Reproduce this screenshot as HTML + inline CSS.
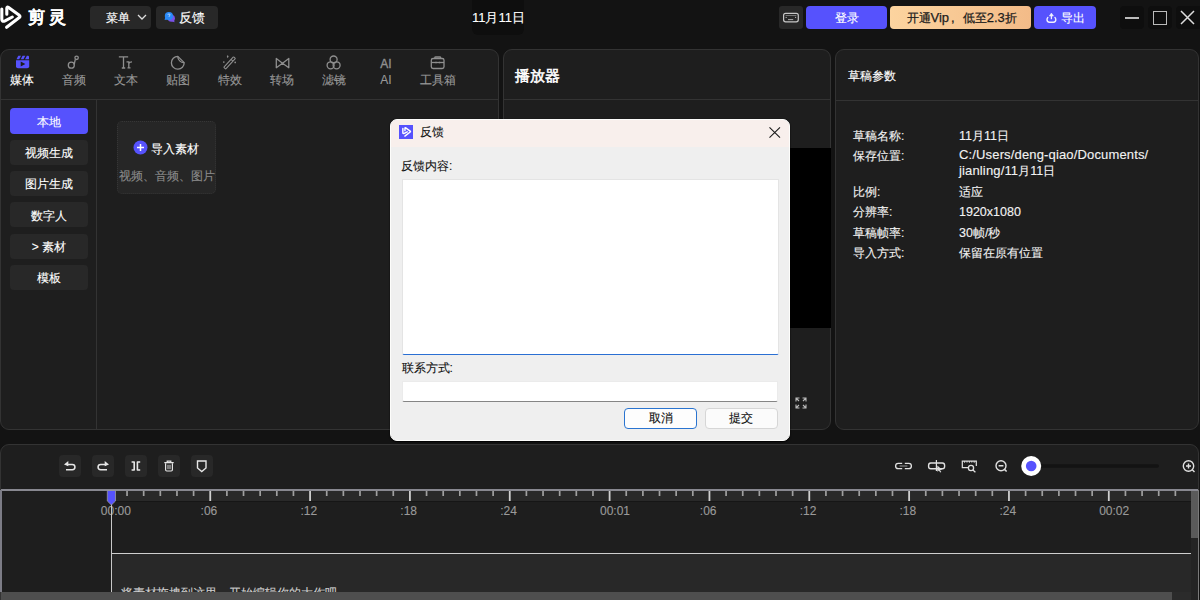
<!DOCTYPE html>
<html><head><meta charset="utf-8">
<style>
*{box-sizing:border-box;margin:0;padding:0}
html,body{width:1200px;height:600px;overflow:hidden;background:#131313;font-family:"Liberation Sans",sans-serif;color:#e8e8e8;font-size:12px}
.a{position:absolute}
.btn{position:absolute;background:#282828;border-radius:4px}
.panel{position:absolute;background:#1e1e1e;border:1px solid #333;border-radius:9px}
.t{position:absolute;white-space:nowrap;line-height:1;-webkit-text-stroke:0.12px currentColor}
svg{position:absolute;overflow:visible}
</style></head><body>

<!-- ===== TOP BAR ===== -->
<svg style="left:0;top:0" width="26" height="32" viewBox="0 0 26 32">
  <path d="M1.8 9 V19 Q1.8 22.2 5 20.8 L12.3 17" fill="none" stroke="#fff" stroke-width="3.1" stroke-linecap="round" stroke-linejoin="round"/>
  <path d="M6.8 14.3 V8.3 Q6.8 6.3 8.6 7.6 L19.3 15.3 Q20.6 16.5 19.3 17.6 L6.6 27.3" fill="none" stroke="#fff" stroke-width="3.1" stroke-linecap="round" stroke-linejoin="round"/>
</svg>
<div class="t" style="left:27.5px;top:9px;font-size:16.5px;font-weight:bold;color:#fff;letter-spacing:4px;-webkit-text-stroke:0.1px #fff">剪灵</div>

<div class="btn" style="left:90px;top:6px;width:61px;height:23px"></div>
<div class="t" style="left:105.5px;top:11.5px;font-size:12px;color:#fff">菜单</div>
<svg style="left:137px;top:14px" width="10" height="6" viewBox="0 0 10 6"><path d="M1 1 L5 5 L9 1" fill="none" stroke="#ddd" stroke-width="1.3"/></svg>

<div class="btn" style="left:156px;top:6px;width:62px;height:23px"></div>
<svg style="left:164px;top:12px" width="12" height="11" viewBox="0 0 12 11">
  <circle cx="7.4" cy="6.3" r="3.5" fill="#7a52e8"/>
  <path d="M8 9.5 L10.6 10.3 L9.9 7.5 Z" fill="#7a52e8"/>
  <circle cx="4.9" cy="4.1" r="4.1" fill="#2a8af8"/>
  <path d="M1.2 5.2 L0.6 8 L3.4 7.6 Z" fill="#2a8af8"/>
  <path d="M3.8 2.8 Q4.2 1.9 5 1.9 Q6 1.9 6 2.9 Q6 3.6 5.1 4 V4.8" fill="none" stroke="#cfe6ff" stroke-width="0.8"/>
</svg>
<div class="t" style="left:179px;top:11.5px;font-size:12.5px;color:#fff">反馈</div>

<div class="a" style="left:472px;top:0;width:52px;height:35px;background:#0e0e0e;border-radius:0 0 6px 6px"></div>
<div class="t" style="left:472px;top:11px;font-size:13px;color:#fff">11月11日</div>

<div class="btn" style="left:779px;top:6px;width:24px;height:23px;border-radius:3px"></div>
<svg style="left:778px;top:6px" width="26" height="23" viewBox="778 6 26 23">
  <rect x="783.6" y="13.4" width="14.7" height="8.4" rx="2" fill="none" stroke="#c8c8c8" stroke-width="1.2"/>
  <path d="M785.6 15.5 H796.4" stroke="#8a8a8a" stroke-width="0.8"/>
  <circle cx="786.2" cy="17.4" r="0.65" fill="#aaa"/><circle cx="795.6" cy="17.3" r="0.65" fill="#bbb"/>
  <path d="M788 19.6 H793.2" stroke="#aaa" stroke-width="1"/>
</svg>
<div class="a" style="left:806px;top:6px;width:81px;height:23px;background:#5652fd;border-radius:4px"></div>
<div class="t" style="left:834.5px;top:11.5px;font-size:12px;color:#fff">登录</div>

<div class="a" style="left:890px;top:6px;width:141px;height:23px;background:linear-gradient(90deg,#fcd49f,#f3bb88);border-radius:4px"></div>
<div class="t" style="left:906.5px;top:10.5px;font-size:12px;color:#1c1c1c;-webkit-text-stroke:0.25px #1c1c1c">开通<span style="font-size:13px">Vip</span><span style="margin-left:2px;margin-right:8px;font-size:13px">,</span>低至<span style="font-size:13px">2.3</span>折</div>

<div class="a" style="left:1034px;top:6px;width:62px;height:23px;background:#5652fd;border-radius:4px"></div>
<svg style="left:1046px;top:12px" width="11" height="12" viewBox="0 0 11 12">
  <path d="M1.8 5.5 Q1 6.2 1 7.8 Q1 10.2 3.4 10.2 H7.4 Q9.8 10.2 9.8 7.8 Q9.8 6.2 9 5.5" fill="none" stroke="#f0f0ff" stroke-width="1.4" stroke-linecap="round"/>
  <path d="M5.4 7.2 V3.2" stroke="#f0f0ff" stroke-width="1.3"/>
  <path d="M3.4 4 L5.4 1.1 L7.4 4 Z" fill="#f0f0ff" stroke="#f0f0ff" stroke-width="0.6" stroke-linejoin="round"/>
</svg>
<div class="t" style="left:1061px;top:11.5px;font-size:12px;color:#fff">导出</div>

<div class="a" style="left:1120px;top:6px;width:24px;height:23px;background:#0e0e0e;border-radius:4px"></div>
<div class="a" style="left:1125px;top:17px;width:14px;height:1.5px;background:#bbb"></div>
<div class="a" style="left:1148px;top:6px;width:24px;height:23px;background:#0e0e0e;border-radius:4px"></div>
<div class="a" style="left:1153px;top:11px;width:14px;height:14px;border:1.5px solid #bbb"></div>
<div class="a" style="left:1176px;top:6px;width:24px;height:23px;background:#0e0e0e;border-radius:4px 0 0 4px"></div>
<svg style="left:1180px;top:10px" width="15" height="15" viewBox="0 0 15 15"><path d="M1 1 L14 14 M14 1 L1 14" stroke="#ddd" stroke-width="1.5"/></svg>

<!-- ===== PANEL 1 ===== -->
<div class="panel" style="left:0;top:49px;width:499px;height:381px"></div>
<div class="a" style="left:1px;top:99px;width:497px;height:1px;background:#333"></div>
<div class="a" style="left:96px;top:100px;width:1px;height:329px;background:#333"></div>

<svg style="left:0;top:0" width="1200" height="600" viewBox="0 0 1200 600">
  <!-- media clapper -->
  <g fill="#5652fd">
    <path d="M16.5 59.2 L18.3 55.8 L21 55.8 L19.2 59.2 Z"/>
    <path d="M20.8 59.2 L22.6 55.8 L25.3 55.8 L23.5 59.2 Z"/>
    <path d="M25.1 59.2 L26.9 55.8 L28 55.8 Q29 55.8 29 57 L29 59.2 Z"/>
    <path d="M16 60.3 H29.2 V66.3 Q29.2 68.3 27.2 68.3 H18 Q16 68.3 16 66.3 Z"/>
  </g>
  <path d="M20.7 61.4 L25.4 63.9 L20.7 66.4 Z" fill="#1e1e1e"/>
  <!-- music -->
  <g fill="none" stroke="#8f8f8f" stroke-width="1.3">
    <circle cx="71.3" cy="65.2" r="3"/>
    <path d="M74.2 64.5 L75.3 59.3"/>
    <circle cx="76.6" cy="57.8" r="1.7"/>
  </g>
  <!-- Tr -->
  <g fill="none" stroke="#8f8f8f" stroke-width="1.3">
    <path d="M119.5 57.5 V56.8 H127.5 V57.5 M123.5 56.8 V68 M121.8 68 H125.2"/>
    <path d="M126.5 61.8 H128.8 V67.8 M127.5 67.8 H130.5 M128.8 63.5 Q129.8 61.8 132 61.8"/>
  </g>
  <!-- sticker -->
  <g fill="none" stroke="#8f8f8f" stroke-width="1.3" stroke-linejoin="round">
    <path d="M177.8 56.4 A6.4 6.4 0 1 0 184.2 62.6 Z"/>
    <path d="M177.8 56.4 A6.2 6.2 0 0 0 184.2 62.6"/>
  </g>
  <!-- wand -->
  <g transform="translate(229.6,62.9) rotate(-47)">
    <rect x="-7.2" y="-1.3" width="14.4" height="2.6" rx="0.6" fill="none" stroke="#8f8f8f" stroke-width="1.1"/>
    <path d="M3.5 -1.3 V1.3" stroke="#8f8f8f" stroke-width="1"/>
  </g>
  <g fill="#8f8f8f">
    <path d="M227.7 55 L228.6 56.6 L227.7 58.2 L226.8 56.6 Z"/>
    <circle cx="223.8" cy="62" r="0.85"/>
    <circle cx="235.2" cy="62.4" r="0.85"/>
  </g>
  <!-- bowtie -->
  <path d="M276.3 58.5 L282.5 63.2 L276.3 67.7 Z M288.8 58.5 L282.5 63.2 L288.8 67.7 Z" fill="none" stroke="#8f8f8f" stroke-width="1.3" stroke-linejoin="round"/>
  <!-- filter -->
  <g fill="none" stroke="#8f8f8f" stroke-width="1.3">
    <circle cx="333.6" cy="59.5" r="3.5"/>
    <circle cx="330.6" cy="65.3" r="3.5"/>
    <circle cx="336.6" cy="65.3" r="3.5"/>
  </g>
  <!-- AI -->
  <text x="380.2" y="67.6" font-family="Liberation Sans" font-size="12" fill="#8f8f8f" stroke="#8f8f8f" stroke-width="0.35">AI</text>
  <!-- toolbox -->
  <g fill="none" stroke="#8f8f8f" stroke-width="1.3">
    <path d="M434.8 58.5 V57.8 Q434.8 57 435.8 57 H439.7 Q440.7 57 440.7 57.8 V58.5"/>
    <rect x="431.3" y="58.5" width="12.7" height="10" rx="1.8"/>
    <path d="M431.3 62.5 H444"/>
    <path d="M436 61.8 V63.3 M439.5 61.8 V63.3"/>
  </g>
</svg>
<div class="t" style="left:0;top:73.5px;width:44px;text-align:center;font-size:12px;color:#fff">媒体</div>
<div class="t" style="left:52px;top:73.5px;width:44px;text-align:center;font-size:12px;color:#999">音频</div>
<div class="t" style="left:104px;top:73.5px;width:44px;text-align:center;font-size:12px;color:#999">文本</div>
<div class="t" style="left:156px;top:73.5px;width:44px;text-align:center;font-size:12px;color:#999">贴图</div>
<div class="t" style="left:208px;top:73.5px;width:44px;text-align:center;font-size:12px;color:#999">特效</div>
<div class="t" style="left:260px;top:73.5px;width:44px;text-align:center;font-size:12px;color:#999">转场</div>
<div class="t" style="left:312px;top:73.5px;width:44px;text-align:center;font-size:12px;color:#999">滤镜</div>
<div class="t" style="left:364px;top:73.5px;width:44px;text-align:center;font-size:12px;color:#999">AI</div>
<div class="t" style="left:408px;top:73.5px;width:60px;text-align:center;font-size:12px;color:#999">工具箱</div>


<div class="a" style="left:10px;top:108px;width:78px;height:25.5px;background:#5652fd;border-radius:4px"></div>
<div class="t" style="left:10px;top:116px;width:78px;text-align:center;font-size:12px;color:#fff">本地</div>
<div class="btn" style="left:10px;top:140px;width:78px;height:25px"></div>
<div class="t" style="left:10px;top:147px;width:78px;text-align:center;font-size:12px;color:#fff">视频生成</div>
<div class="btn" style="left:10px;top:171px;width:78px;height:25px"></div>
<div class="t" style="left:10px;top:178px;width:78px;text-align:center;font-size:12px;color:#fff">图片生成</div>
<div class="btn" style="left:10px;top:202px;width:78px;height:25px"></div>
<div class="t" style="left:10px;top:209.5px;width:78px;text-align:center;font-size:12px;color:#fff">数字人</div>
<div class="btn" style="left:10px;top:234px;width:78px;height:25px"></div>
<div class="t" style="left:10px;top:241px;width:78px;text-align:center;font-size:12px;color:#fff">&gt; 素材</div>
<div class="btn" style="left:10px;top:265px;width:78px;height:25px"></div>
<div class="t" style="left:10px;top:272px;width:78px;text-align:center;font-size:12px;color:#fff">模板</div>

<div class="a" style="left:117px;top:121px;width:99px;height:73px;background:#262626;border-radius:5px;border:1px dotted #363636"></div>
<svg style="left:133px;top:140px" width="15" height="15" viewBox="0 0 15 15"><circle cx="7.5" cy="7.5" r="7" fill="#5652fd"/><path d="M7.5 4 V11 M4 7.5 H11" stroke="#fff" stroke-width="1.5"/></svg>
<div class="t" style="left:151px;top:142.5px;font-size:12px;color:#fff">导入素材</div>
<div class="t" style="left:119px;top:169.5px;font-size:12px;color:#8a8a8a">视频、音频、图片</div>

<!-- ===== PANEL 2 ===== -->
<div class="panel" style="left:503px;top:49px;width:328px;height:381px"></div>
<div class="a" style="left:504px;top:99px;width:326px;height:1px;background:#333"></div>
<div class="t" style="left:515px;top:68.5px;font-size:14.5px;color:#fff;-webkit-text-stroke:0.55px #fff">播放器</div>
<div class="a" style="left:504px;top:148px;width:327px;height:180px;background:#000"></div>
<svg style="left:795px;top:397px" width="12" height="12" viewBox="0 0 12 12"><path d="M1 4.5 V1 H4.5 M1 1 L4 4 M11 4.5 V1 H7.5 M11 1 L8 4 M1 7.5 V11 H4.5 M1 11 L4 8 M11 7.5 V11 H7.5 M11 11 L8 8" fill="none" stroke="#bbb" stroke-width="1.1"/></svg>

<!-- ===== PANEL 3 ===== -->
<div class="panel" style="left:835px;top:49px;width:364px;height:381px"></div>
<div class="a" style="left:836px;top:100px;width:362px;height:1px;background:#333"></div>
<div class="t" style="left:847.5px;top:69.5px;font-size:12px;color:#fff">草稿参数</div>

<div class="t" style="left:853px;top:129px;font-size:12px;line-height:15px;color:#f2f2f2">草稿名称:</div>
<div class="t" style="left:959px;top:129px;font-size:12px;line-height:15px;color:#f2f2f2"><span style="font-size:12.5px">11</span>月<span style="font-size:12.5px">11</span>日</div>
<div class="t" style="left:853px;top:149px;font-size:12px;line-height:15px;color:#f2f2f2">保存位置:</div>
<div class="t" style="left:959px;top:147px;font-size:12px;line-height:15px;color:#f2f2f2"><span style="font-size:13px;letter-spacing:0.15px">C:/Users/deng-qiao/Documents/</span><br><span style="font-size:13px;letter-spacing:0.15px">jianling/11</span>月<span style="font-size:12.5px">11</span>日</div>
<div class="t" style="left:853px;top:185px;font-size:12px;line-height:15px;color:#f2f2f2">比例:</div>
<div class="t" style="left:959px;top:185px;font-size:12px;line-height:15px;color:#f2f2f2">适应</div>
<div class="t" style="left:853px;top:205px;font-size:12px;line-height:15px;color:#f2f2f2">分辨率:</div>
<div class="t" style="left:959px;top:205px;font-size:12px;line-height:15px;color:#f2f2f2"><span style="font-size:12.5px">1920x1080</span></div>
<div class="t" style="left:853px;top:226px;font-size:12px;line-height:15px;color:#f2f2f2">草稿帧率:</div>
<div class="t" style="left:959px;top:226px;font-size:12px;line-height:15px;color:#f2f2f2"><span style="font-size:12.5px">30</span>帧<span style="font-size:12.5px">/</span>秒</div>
<div class="t" style="left:853px;top:246px;font-size:12px;line-height:15px;color:#f2f2f2">导入方式:</div>
<div class="t" style="left:959px;top:246px;font-size:12px;line-height:15px;color:#f2f2f2">保留在原有位置</div>


<!-- ===== TIMELINE ===== -->
<div class="panel" style="left:0;top:444px;width:1199px;height:170px"></div>
<div class="btn" style="left:59px;top:455px;width:22px;height:21.5px;border-radius:4px"></div>
<div class="btn" style="left:92px;top:455px;width:22px;height:21.5px;border-radius:4px"></div>
<div class="btn" style="left:125px;top:455px;width:22px;height:21.5px;border-radius:4px"></div>
<div class="btn" style="left:158px;top:455px;width:22px;height:21.5px;border-radius:4px"></div>
<div class="btn" style="left:191px;top:455px;width:22px;height:21.5px;border-radius:4px"></div>
<svg style="left:0;top:0" width="1200" height="600" viewBox="0 0 1200 600">
  <g fill="none" stroke="#e6e6e6" stroke-width="1.4">
    <!-- undo -->
    <path d="M67 464.4 H72.3 A2.65 2.65 0 0 1 72.3 469.7 H66" stroke-width="1.5"/>
    <!-- redo -->
    <path d="M106 464.4 H100.7 A2.65 2.65 0 0 0 100.7 469.7 H107" stroke-width="1.5"/>
    <!-- split -->
    <path d="M131.6 462 H134.2 V470 H131.6" stroke-width="1.6" stroke-linejoin="round"/>
    <path d="M140.2 462 H137.4 V470 H140.2" stroke-width="1.6" stroke-linejoin="round"/>
    <!-- delete -->
    <path d="M164.3 462.6 H173.7 M167.2 462.6 V461.2 H170.8 V462.6" stroke-width="1.2"/>
    <path d="M165.6 463.2 V469.8 Q165.6 471 166.8 471 H171.2 Q172.4 471 172.4 469.8 V463.2" stroke-width="1.2"/>
    <path d="M168 464.8 V469.2 M170 464.8 V469.2" stroke-width="0.9"/>
    <!-- shield -->
    <path d="M197.5 461 H206 V468 L201.75 471.5 L197.5 468 Z"/>
  </g>
  <g fill="none" stroke="#e0e0e0" stroke-width="1.4">
    <!-- link -->
    <path d="M902.2 463.3 H898.2 Q895.6 463.3 895.6 466 Q895.6 468.7 898.2 468.7 H902.2" stroke-width="1.3"/>
    <path d="M904.8 463.3 H908.8 Q911.4 463.3 911.4 466 Q911.4 468.7 908.8 468.7 H904.8" stroke-width="1.3"/>
    <path d="M899.6 466 H907.4" stroke="#9a9a9a" stroke-width="1"/>
    <!-- split cursor -->
    <rect x="928.6" y="463" width="16" height="5.8" rx="2.2"/>
    <path d="M936.4 460 V471" stroke-width="1.2"/>
    <!-- ruler magnifier -->
    <path d="M968.2 467.6 H962.3 V461.1 H976.3 V466" stroke-width="1.2"/>
    <path d="M964.6 461 V462.8 M967 461 V462.6 M969.4 461 V462.8 M971.8 461 V462.6 M974.2 461 V462.8" stroke-width="0.9"/>
    <circle cx="971" cy="468" r="2.6" stroke-width="1.3"/>
    <path d="M972.9 470 L975.4 472.2" stroke-width="1.3"/>
    <!-- zoom out -->
    <circle cx="1001" cy="465.8" r="5" stroke-width="1.4"/>
    <path d="M998.6 465.8 H1003.4 M1004.5 469.4 L1006.6 471.5" stroke-width="1.5"/>
    <!-- zoom in -->
    <circle cx="1188.5" cy="466" r="5.2"/>
    <path d="M1186 466 H1191 M1188.5 463.5 V468.5 M1192.3 469.8 L1194.5 472"/>
  </g>
  <path d="M64 464.4 L68.3 461 L68.3 466.2 Z" fill="#e6e6e6"/>
  <path d="M109 464.4 L104.7 461 L104.7 466.2 Z" fill="#e6e6e6"/>
  <path d="M937.3 465.6 L937.3 471.8 L938.9 470.4 L940.2 472.6 L941.3 472 L940 469.9 L942.2 469.7 Z" fill="#ddd"/>
  <rect x="1040" y="464.3" width="119" height="3.5" rx="1.7" fill="#131313"/>
  <circle cx="1031.2" cy="466" r="10" fill="#fff"/>
  <circle cx="1031.2" cy="466" r="5.3" fill="#5652fd"/>
</svg>
<div class="a" style="left:1px;top:489.2px;width:1197px;height:1.4px;background:#888890"></div>
<div class="a" style="left:111px;top:491px;width:1080px;height:9.5px;background:#292929"></div>
<div class="a" style="left:111px;top:500.5px;width:1080px;height:1px;background:#161616"></div>
<div class="a" style="left:0.4px;top:490px;width:1.3px;height:102px;background:#7c7c86"></div>
<div class="a" style="left:111px;top:554px;width:1080px;height:38px;background:#282828"></div>
<div class="a" style="left:111px;top:553px;width:1080px;height:1.2px;background:#cfcfcf"></div>
<div class="t" style="left:120.5px;top:586.5px;font-size:12px;color:#d0d0d0">将素材拖拽到这里，开始编辑你的大作吧</div>
<div class="a" style="left:1px;top:592px;width:1171px;height:8px;background:#4e4e4e"></div>
<div class="a" style="left:1172px;top:592px;width:19px;height:8px;background:#2b2b2b"></div>
<div class="a" style="left:1191px;top:491px;width:7px;height:109px;background:#242424"></div>
<div class="a" style="left:1197.5px;top:490px;width:1px;height:110px;background:#7a7a7a"></div>
<div class="a" style="left:1191px;top:491px;width:7px;height:47px;background:#5a5a5a"></div>
<svg style="left:0;top:0" width="1200" height="600" viewBox="0 0 1200 600"><rect x="109.50" y="491" width="1.8" height="10" fill="#cfcfcf"/><rect x="126.19" y="491" width="1.7" height="5" fill="#a0a0a0"/><rect x="142.83" y="491" width="1.7" height="5" fill="#a0a0a0"/><rect x="159.47" y="491" width="1.7" height="5" fill="#a0a0a0"/><rect x="176.11" y="491" width="1.7" height="5" fill="#a0a0a0"/><rect x="192.75" y="491" width="1.7" height="5" fill="#a0a0a0"/><rect x="209.34" y="491" width="1.8" height="10" fill="#cfcfcf"/><rect x="226.03" y="491" width="1.7" height="5" fill="#a0a0a0"/><rect x="242.67" y="491" width="1.7" height="5" fill="#a0a0a0"/><rect x="259.31" y="491" width="1.7" height="5" fill="#a0a0a0"/><rect x="275.95" y="491" width="1.7" height="5" fill="#a0a0a0"/><rect x="292.59" y="491" width="1.7" height="5" fill="#a0a0a0"/><rect x="309.18" y="491" width="1.8" height="10" fill="#cfcfcf"/><rect x="325.87" y="491" width="1.7" height="5" fill="#a0a0a0"/><rect x="342.51" y="491" width="1.7" height="5" fill="#a0a0a0"/><rect x="359.15" y="491" width="1.7" height="5" fill="#a0a0a0"/><rect x="375.79" y="491" width="1.7" height="5" fill="#a0a0a0"/><rect x="392.43" y="491" width="1.7" height="5" fill="#a0a0a0"/><rect x="409.02" y="491" width="1.8" height="10" fill="#cfcfcf"/><rect x="425.71" y="491" width="1.7" height="5" fill="#a0a0a0"/><rect x="442.35" y="491" width="1.7" height="5" fill="#a0a0a0"/><rect x="458.99" y="491" width="1.7" height="5" fill="#a0a0a0"/><rect x="475.63" y="491" width="1.7" height="5" fill="#a0a0a0"/><rect x="492.27" y="491" width="1.7" height="5" fill="#a0a0a0"/><rect x="508.86" y="491" width="1.8" height="10" fill="#cfcfcf"/><rect x="525.55" y="491" width="1.7" height="5" fill="#a0a0a0"/><rect x="542.19" y="491" width="1.7" height="5" fill="#a0a0a0"/><rect x="558.83" y="491" width="1.7" height="5" fill="#a0a0a0"/><rect x="575.47" y="491" width="1.7" height="5" fill="#a0a0a0"/><rect x="592.11" y="491" width="1.7" height="5" fill="#a0a0a0"/><rect x="608.70" y="491" width="1.8" height="10" fill="#cfcfcf"/><rect x="625.39" y="491" width="1.7" height="5" fill="#a0a0a0"/><rect x="642.03" y="491" width="1.7" height="5" fill="#a0a0a0"/><rect x="658.67" y="491" width="1.7" height="5" fill="#a0a0a0"/><rect x="675.31" y="491" width="1.7" height="5" fill="#a0a0a0"/><rect x="691.95" y="491" width="1.7" height="5" fill="#a0a0a0"/><rect x="708.54" y="491" width="1.8" height="10" fill="#cfcfcf"/><rect x="725.23" y="491" width="1.7" height="5" fill="#a0a0a0"/><rect x="741.87" y="491" width="1.7" height="5" fill="#a0a0a0"/><rect x="758.51" y="491" width="1.7" height="5" fill="#a0a0a0"/><rect x="775.15" y="491" width="1.7" height="5" fill="#a0a0a0"/><rect x="791.79" y="491" width="1.7" height="5" fill="#a0a0a0"/><rect x="808.38" y="491" width="1.8" height="10" fill="#cfcfcf"/><rect x="825.07" y="491" width="1.7" height="5" fill="#a0a0a0"/><rect x="841.71" y="491" width="1.7" height="5" fill="#a0a0a0"/><rect x="858.35" y="491" width="1.7" height="5" fill="#a0a0a0"/><rect x="874.99" y="491" width="1.7" height="5" fill="#a0a0a0"/><rect x="891.63" y="491" width="1.7" height="5" fill="#a0a0a0"/><rect x="908.22" y="491" width="1.8" height="10" fill="#cfcfcf"/><rect x="924.91" y="491" width="1.7" height="5" fill="#a0a0a0"/><rect x="941.55" y="491" width="1.7" height="5" fill="#a0a0a0"/><rect x="958.19" y="491" width="1.7" height="5" fill="#a0a0a0"/><rect x="974.83" y="491" width="1.7" height="5" fill="#a0a0a0"/><rect x="991.47" y="491" width="1.7" height="5" fill="#a0a0a0"/><rect x="1008.06" y="491" width="1.8" height="10" fill="#cfcfcf"/><rect x="1024.75" y="491" width="1.7" height="5" fill="#a0a0a0"/><rect x="1041.39" y="491" width="1.7" height="5" fill="#a0a0a0"/><rect x="1058.03" y="491" width="1.7" height="5" fill="#a0a0a0"/><rect x="1074.67" y="491" width="1.7" height="5" fill="#a0a0a0"/><rect x="1091.31" y="491" width="1.7" height="5" fill="#a0a0a0"/><rect x="1107.90" y="491" width="1.8" height="10" fill="#cfcfcf"/><rect x="1124.59" y="491" width="1.7" height="5" fill="#a0a0a0"/><rect x="1141.23" y="491" width="1.7" height="5" fill="#a0a0a0"/><rect x="1157.87" y="491" width="1.7" height="5" fill="#a0a0a0"/><rect x="1174.51" y="491" width="1.7" height="5" fill="#a0a0a0"/></svg>
<div class="t" style="left:100.8px;top:505px;font-size:12px;color:#9a9a9a">00:00</div>
<div class="t" style="left:200.6px;top:505px;font-size:12px;color:#9a9a9a">:06</div>
<div class="t" style="left:300.5px;top:505px;font-size:12px;color:#9a9a9a">:12</div>
<div class="t" style="left:400.3px;top:505px;font-size:12px;color:#9a9a9a">:18</div>
<div class="t" style="left:500.2px;top:505px;font-size:12px;color:#9a9a9a">:24</div>
<div class="t" style="left:600.0px;top:505px;font-size:12px;color:#9a9a9a">00:01</div>
<div class="t" style="left:699.8px;top:505px;font-size:12px;color:#9a9a9a">:06</div>
<div class="t" style="left:799.7px;top:505px;font-size:12px;color:#9a9a9a">:12</div>
<div class="t" style="left:899.5px;top:505px;font-size:12px;color:#9a9a9a">:18</div>
<div class="t" style="left:999.4px;top:505px;font-size:12px;color:#9a9a9a">:24</div>
<div class="t" style="left:1099.2px;top:505px;font-size:12px;color:#9a9a9a">00:02</div>
<div class="a" style="left:110.8px;top:500px;width:1.1px;height:92px;background:#c8c8c8"></div>
<svg style="left:0;top:0" width="1200" height="600" viewBox="0 0 1200 600">
<path d="M107.3 490.5 H115.5 V501 L111.4 505 L107.3 501 Z" fill="#5652fd" stroke="#9a9a9a" stroke-width="0.8"/>
</svg>



<!-- ===== DIALOG ===== -->
<div class="a" style="left:390px;top:119px;width:400px;height:322px;background:#efefef;border-radius:7px;overflow:hidden;border:1px solid #fdfdfb;box-shadow:0 1px 1.5px rgba(0,0,0,0.9),0 0 1px rgba(0,0,0,0.6)">
  <div class="a" style="left:0;top:0;width:398px;height:27px;background:#f8efec"></div>
</div>
<div class="a" style="left:399px;top:125px;width:14px;height:14px;background:#5652fd"></div>
<svg style="left:399px;top:125px" width="14" height="14" viewBox="0 0 14 14">
  <g transform="translate(3.1,-0.35) scale(0.42)" fill="none" stroke="#fff" stroke-width="3.4" stroke-linecap="round" stroke-linejoin="round">
  <path d="M1.8 9 V19 Q1.8 22.2 5 20.8 L12.3 17"/>
  <path d="M6.8 14.3 V8.3 Q6.8 6.3 8.6 7.6 L19.3 15.3 Q20.6 16.5 19.3 17.6 L6.6 27.3"/>
  </g>
</svg>
<div class="t" style="left:419.5px;top:125.5px;font-size:12px;color:#111">反馈</div>
<svg style="left:769px;top:127px" width="12" height="11" viewBox="0 0 12 11"><path d="M0.5 0.3 L11 10.7 M11 0.3 L0.5 10.7" stroke="#1a1a1a" stroke-width="1.1"/></svg>
<div class="t" style="left:401px;top:160px;font-size:12px;color:#111">反馈内容:</div>
<div class="a" style="left:402px;top:179px;width:377px;height:176px;background:#fff;border:1px solid #e4e4e4;border-bottom:1.6px solid #2a6fd3;border-radius:0 0 2px 2px"></div>
<div class="t" style="left:401.5px;top:361.5px;font-size:12px;color:#111">联系方式:</div>
<div class="a" style="left:402px;top:381px;width:376px;height:21px;background:#fff;border:1px solid #ebebeb;border-bottom:1.2px solid #858585;border-radius:0 0 2px 2px"></div>
<div class="a" style="left:624px;top:408px;width:73px;height:21px;background:#fdfdfd;border:1.5px solid #2a74d0;border-radius:4px"></div>
<div class="t" style="left:624px;top:412px;width:73px;text-align:center;font-size:12px;color:#111">取消</div>
<div class="a" style="left:705px;top:408px;width:72.5px;height:21px;background:#fbfbfb;border:1px solid #d6d6d6;border-radius:4px"></div>
<div class="t" style="left:705px;top:412px;width:72.5px;text-align:center;font-size:12px;color:#111">提交</div>


</body></html>
